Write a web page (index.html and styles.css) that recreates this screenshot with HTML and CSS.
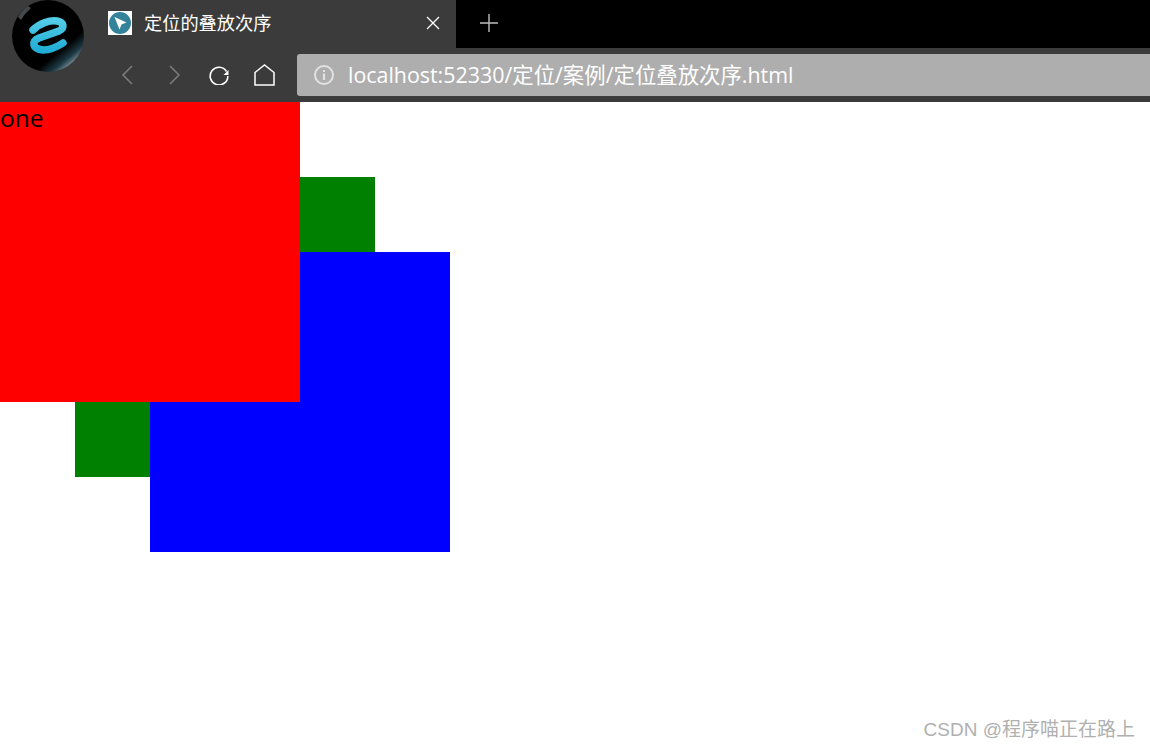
FILE: index.html
```html
<!DOCTYPE html>
<html lang="zh-CN">
<head>
  <meta charset="UTF-8">
  <title>定位的叠放次序</title>
  <link rel="stylesheet" href="styles.css">
</head>
<body>
  <div class="browser-bar">
    <svg class="app-logo" width="72" height="72" viewBox="0 0 72 72">
      <defs>
        <linearGradient id="ball" x1="0.35" y1="0.35" x2="0.85" y2="0.95">
          <stop offset="0" stop-color="#000"/>
          <stop offset="0.6" stop-color="#000"/>
          <stop offset="0.8" stop-color="#1d3a44"/>
          <stop offset="1" stop-color="#a9bcc2"/>
        </linearGradient>
        <linearGradient id="swirl" x1="0" y1="0" x2="0" y2="1">
          <stop offset="0" stop-color="#52cbe6"/>
          <stop offset="1" stop-color="#21add6"/>
        </linearGradient>
      </defs>
      <circle cx="36" cy="36" r="36" fill="url(#ball)"/>
      <path d="M6 17 Q10 10 16 6 L19 8 Q13 13 9 20 Z" fill="#44484a"/>
      <path d="M21 30 C28 23 38 20 45 21 C52 22 53 28 47 31 L27 38 C19 41 20 49 31 50 C39 50 45 47 51 43" fill="none" stroke="url(#swirl)" stroke-width="7.5" stroke-linecap="round" stroke-linejoin="round"/>
    </svg>

    <div class="tab-strip">
      <div class="tab">
        <svg class="favicon" width="24" height="24" viewBox="0 0 24 24">
          <rect width="24" height="24" fill="#fff"/>
          <circle cx="12" cy="12" r="11" fill="#35829b"/>
          <path d="M6.5 6 L18.5 11.5 L13.5 13.5 L11.5 18.5 Z" fill="#fff"/>
        </svg>
        <span class="tab-title">定位的叠放次序</span>
        <svg class="tab-close" width="14" height="14" viewBox="0 0 14 14">
          <path d="M1 1 L13 13 M13 1 L1 13" stroke="#fff" stroke-width="1.3" fill="none"/>
        </svg>
      </div>
      <svg class="new-tab" width="18" height="18" viewBox="0 0 18 18">
        <path d="M9 0 V18 M0 9 H18" stroke="#bdbdbd" stroke-width="1.4" fill="none"/>
      </svg>
    </div>

    <div class="nav-row">
      <div class="nav-buttons">
        <svg class="nav-back" width="14" height="20" viewBox="0 0 14 20">
          <path d="M12 1 L3 10 L12 19" stroke="#7b7b7b" stroke-width="1.6" fill="none"/>
        </svg>
        <svg class="nav-forward" width="14" height="20" viewBox="0 0 14 20">
          <path d="M2 1 L11 10 L2 19" stroke="#7b7b7b" stroke-width="1.6" fill="none"/>
        </svg>
        <svg class="nav-reload" width="20" height="20" viewBox="0 0 20 20">
          <path d="M17.5 6.5 A8.8 8.8 0 1 0 18.8 11" stroke="#fff" stroke-width="1.6" fill="none"/>
          <path d="M19.5 5 V10 H14.5 Z" fill="#fff"/>
        </svg>
        <svg class="nav-home" width="21" height="22" viewBox="0 0 21 22">
          <path d="M1 21 V8.5 L10.5 1 L20 8.5 V21 Z" stroke="#fff" stroke-width="1.5" fill="none"/>
        </svg>
      </div>
      <div class="address-bar">
        <svg width="20" height="20" viewBox="0 0 20 20">
          <circle cx="10" cy="10" r="9" stroke="#e2e2e2" stroke-width="2" fill="none"/>
          <path d="M10 8.5 V15 M10 5 V7" stroke="#e2e2e2" stroke-width="2.2" fill="none"/>
        </svg>
        <span class="url"><span class="latin">localhost:52330</span>/定位/案例/定位叠放次序<span class="latin">.html</span></span>
      </div>
    </div>
  </div>

  <div class="page">
    <div class="box one">one</div>
    <div class="box two"></div>
    <div class="box three"></div>
    <div class="watermark">CSDN @程序喵正在路上</div>
  </div>
</body>
</html>
```

FILE: styles.css
```css
html, body {
  height: 100%;
}
body {
  margin: 0;
  display: flex;
  flex-direction: column;
  overflow: hidden;
  background: #fff;
  font-family: "Open Sans", "Noto Sans CJK SC", sans-serif;
}
.browser-bar {
  position: relative;
  height: 102px;
  flex-shrink: 0;
  background: #3b3b3b;
  color: #fff;
}
.app-logo {
  position: absolute;
  left: 12px;
  top: 0;
}
.tab-strip {
  display: flex;
  align-items: center;
  height: 48px;
  background: #000;
}
.tab {
  display: flex;
  align-items: center;
  width: 456px;
  height: 100%;
  padding: 0 16px 2px 108px;
  box-sizing: border-box;
  background: #3b3b3b;
}
.favicon {
  margin-right: 12px;
}
.tab-title {
  flex: 1;
  font-size: 18.2px;
  line-height: 24px;
}
.new-tab {
  margin: 0 0 2px 24px;
}
.nav-row {
  display: flex;
  align-items: center;
  height: 42px;
  margin-top: 6px;
}
.nav-buttons {
  display: flex;
  align-items: center;
  width: 297px;
  padding-left: 120px;
  box-sizing: border-box;
}
.nav-forward {
  margin-left: 34px;
}
.nav-reload {
  margin-left: 27px;
}
.nav-home {
  margin-left: 25px;
}
.address-bar {
  flex: 1;
  display: flex;
  align-items: center;
  gap: 14px;
  height: 100%;
  padding-left: 17px;
  border-radius: 3px 0 0 3px;
  background: #aeaeae;
}
.url {
  font-size: 21.4px;
  line-height: 28px;
  margin-top: -1px;
  color: #fff;
}
.latin {
  font-weight: 500;
}
.page {
  position: relative;
  flex: 1;
}
.box {
  position: absolute;
  width: 300px;
  height: 300px;
}
.one {
  left: 0;
  top: 0;
  z-index: 3;
  background: #f00;
  color: #000;
  font-size: 24.5px;
  line-height: 31px;
}
.two {
  left: 75px;
  top: 75px;
  z-index: 1;
  background: #008000;
}
.three {
  left: 150px;
  top: 150px;
  z-index: 2;
  background: #00f;
}
.watermark {
  position: absolute;
  right: 15px;
  bottom: 7px;
  font-family: "Liberation Sans", "Noto Sans CJK SC", sans-serif;
  font-size: 19px;
  color: #b0b0b0;
}
```
